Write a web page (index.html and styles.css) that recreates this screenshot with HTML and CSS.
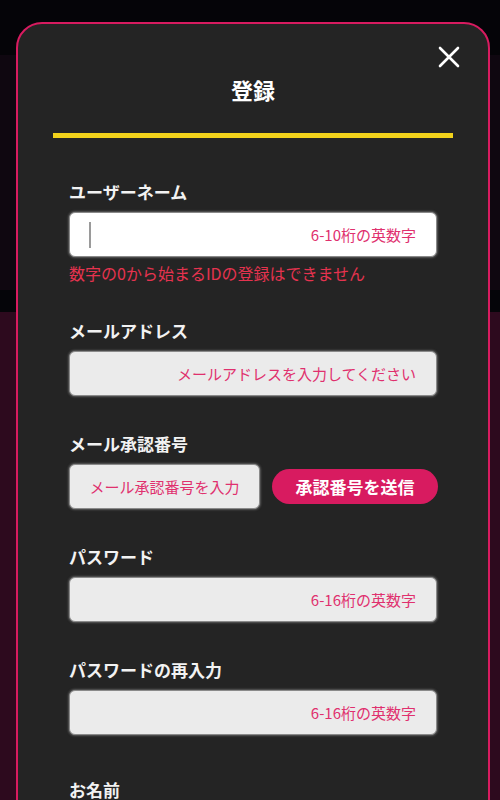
FILE: index.html
```html
<!DOCTYPE html>
<html lang="ja">
<head>
<meta charset="utf-8">
<title>登録</title>
<link rel="stylesheet" href="styles.css">
</head>
<body>
<div class="modal">
  <button class="close" type="button" aria-label="閉じる">
    <svg width="22" height="22" viewBox="0 0 22 22"><path d="M2 2 L20 20 M20 2 L2 20" stroke="#fff" stroke-width="2.6" stroke-linecap="round" fill="none"/></svg>
  </button>
  <h1 class="title">登録</h1>
  <div class="bar"></div>
  <form class="form">
    <div class="field">
      <label class="label">ユーザーネーム</label>
      <div class="input-wrap">
        <input class="input input-focus" type="text" placeholder="6-10桁の英数字">
        <span class="caret"></span>
      </div>
      <p class="error">数字の0から始まるIDの登録はできません</p>
    </div>
    <div class="field">
      <label class="label">メールアドレス</label>
      <input class="input" type="text" placeholder="メールアドレスを入力してください">
    </div>
    <div class="field">
      <label class="label">メール承認番号</label>
      <div class="row">
        <input class="input input-code" type="text" placeholder="メール承認番号を入力">
        <button class="send" type="button">承認番号を送信</button>
      </div>
    </div>
    <div class="field">
      <label class="label">パスワード</label>
      <input class="input" type="password" placeholder="6-16桁の英数字">
    </div>
    <div class="field field-wide">
      <label class="label">パスワードの再入力</label>
      <input class="input" type="password" placeholder="6-16桁の英数字">
    </div>
    <div class="field">
      <label class="label">お名前</label>
      <input class="input" type="text" placeholder="">
    </div>
  </form>
</div>
</body>
</html>
```
FILE: styles.css
```css
html, body {
  margin: 0;
  height: 100%;
}
body {
  overflow: hidden;
  font-family: "Noto Sans CJK JP", "Noto Sans", sans-serif;
  background: linear-gradient(to bottom,
    #050408 0, #050408 55px,
    #0f0710 55px, #0f0710 290px,
    #050509 290px, #050509 312px,
    #2d0a1e 312px, #2d0a1e 100%);
}
.modal {
  position: relative;
  margin: 22px 10px 0 16px;
  border: 2px solid #d81b60;
  border-radius: 26px;
  background: #242424;
  padding-top: 50px;
  min-height: 820px;
}
.close {
  position: absolute;
  top: 20px;
  right: 26px;
  width: 26px;
  height: 26px;
  padding: 2px;
  border: 0;
  background: transparent;
  cursor: pointer;
}
.close svg {
  display: block;
}
.title {
  margin: 0;
  text-align: center;
  font-size: 22px;
  line-height: 30px;
  font-weight: 700;
  color: #fff;
}
.bar {
  height: 5px;
  margin: 29px 35px 0;
  background: #f2d21b;
}
.form {
  padding: 44px 51px 0;
}
.field {
  margin-bottom: 38px;
}
.field-wide {
  margin-bottom: 45px;
}
.label {
  display: block;
  margin-bottom: 10px;
  font-size: 17px;
  line-height: 20px;
  font-weight: 700;
  color: #f2f2f2;
}
.input-wrap {
  position: relative;
}
.input {
  display: block;
  width: 100%;
  box-sizing: border-box;
  height: 45px;
  padding: 0 20px;
  border: 1px solid #8a8a8a;
  border-radius: 6px;
  background: #ebebeb;
  box-shadow: 0 0 2px 1px rgba(190, 190, 190, 0.35);
  font-family: inherit;
  font-size: 15px;
  color: #333;
  text-align: right;
  outline: none;
}
.input::placeholder {
  color: #e0306e;
  opacity: 1;
}
.input-focus {
  background: #fff;
}
.caret {
  position: absolute;
  left: 20px;
  top: 10px;
  width: 2px;
  height: 26px;
  background: #9a9a9a;
}
.error {
  margin: 6px 0 5px;
  font-size: 16px;
  line-height: 20px;
  color: #e5334f;
}
.row {
  display: flex;
  align-items: center;
  gap: 12px;
}
.input-code {
  flex: none;
  width: 191px;
  padding: 0 8px;
  text-align: center;
}
.send {
  flex: none;
  width: 166px;
  height: 35px;
  border: 0;
  border-radius: 18px;
  background: #d81b60;
  color: #fff;
  font-family: inherit;
  font-size: 17px;
  font-weight: 700;
  cursor: pointer;
}
```
